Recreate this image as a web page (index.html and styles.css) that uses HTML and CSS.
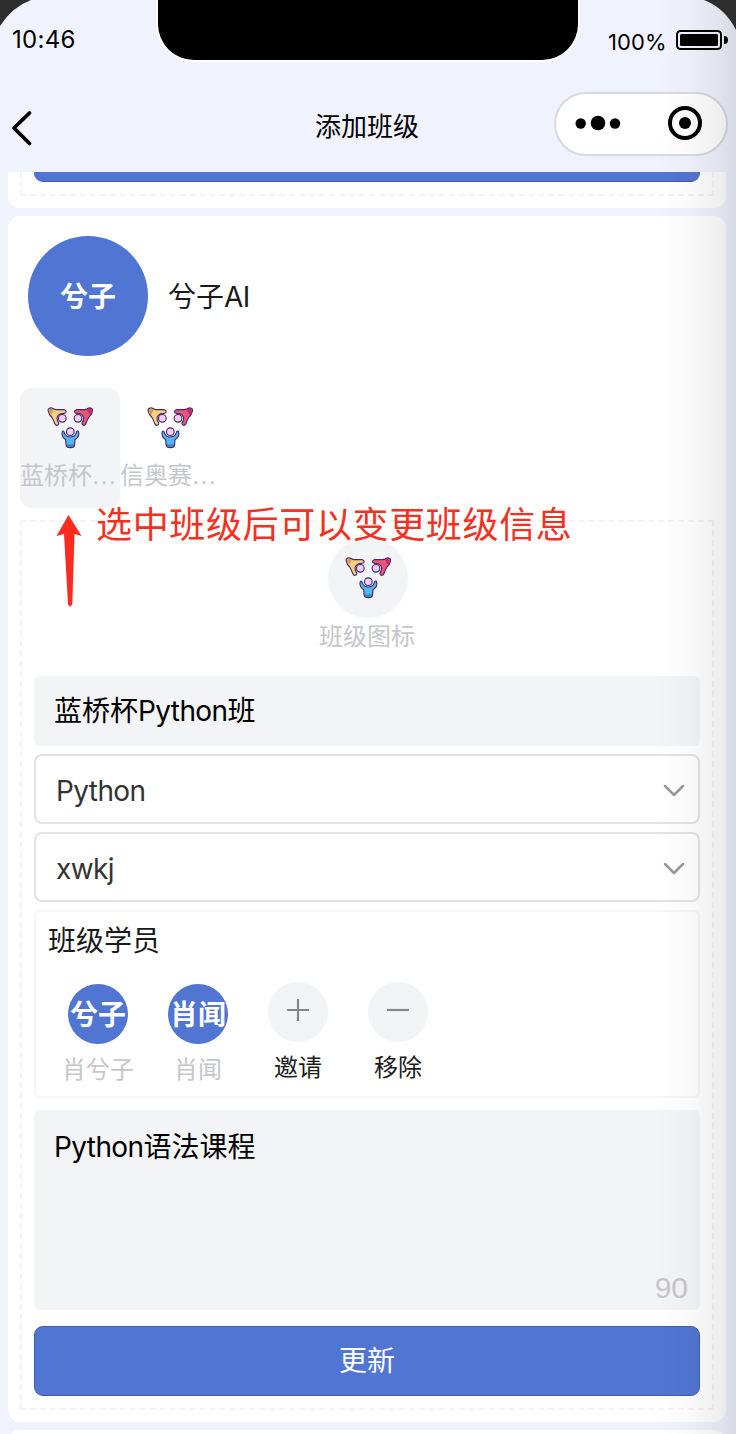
FILE: index.html
```html
<!DOCTYPE html>
<html lang="zh-CN">
<head>
<meta charset="utf-8">
<title>添加班级</title>
<link rel="stylesheet" href="styles.css">
</head>
<body>
<svg class="defs" width="0" height="0">
  <symbol id="team" viewBox="30 36 140 126">
    <g stroke="#3f2b6e" stroke-width="3.4" stroke-linejoin="round" stroke-linecap="round">
      <path fill="#f8cf7c" d="M34 49C31 40 39 38 45 39Q50 43 57 44L82 44Q90 47 86 53Q81 56 71 56Q62 60 60 68Q60 77 65 84Q66 90 60 91Q54 91 52 83Q49 73 44 66Q36 59 34 49Z"/>
      <circle fill="#f3cdfb" cx="76" cy="70" r="11.500"/>
      <path fill="#ee5575" d="M166 49C169 40 161 38 155 39Q150 43 143 44L118 44Q110 47 114 53Q119 56 129 56Q138 60 140 68Q140 77 135 84Q134 90 140 91Q146 91 148 83Q151 73 156 66Q164 59 166 49Z"/>
      <circle fill="#f3cdfb" cx="123" cy="70" r="11.500"/>
      <path fill="#58b4f0" d="M76 109Q73 118 77 125Q81 131 86 134L87 148Q88 158 100 158Q112 158 113 148L114 134Q121 130 124 124Q127 116 124 109Q119 107 118 113Q116 122 109 124Q99 128 90 124Q84 121 82 113Q80 106 76 109Z"/>
      <circle fill="#f3cdfb" cx="100" cy="110" r="11.500"/>
    </g>
    <path fill="#d99a58" d="M36 49Q35 41 45 41L50 44Q46 53 41 61Q37 56 36 49Z"/>
    <path fill="#c22f68" d="M164 49Q165 41 155 41L150 44Q154 53 159 61Q163 56 164 49Z"/>
    <path fill="#3584bd" d="M89 146Q100 151 111 146Q112 156 100 156Q89 156 89 146Z"/>
  </symbol>
</svg>
<div class="phone">
  <header class="header">
    <div class="status">
      <span class="time">10:46</span>
      <div class="notch"></div>
      <div class="power">
        <span class="percent">100%</span>
        <svg width="54" height="22" viewBox="0 0 54 22"><rect x="1" y="1" width="44" height="18" rx="3.500" fill="none" stroke="#000" stroke-width="2"/><rect x="4" y="4" width="38" height="12" rx="1.500"/><path d="M48 6Q52 6 52 10Q52 14 48 14Z"/></svg>
      </div>
    </div>
    <div class="nav">
      <svg class="back" width="24" height="38" viewBox="0 0 24 38"><path d="M20.500 4L5 19L20.500 34.500" fill="none" stroke="#000" stroke-width="3.800" stroke-linecap="round" stroke-linejoin="round"/></svg>
      <h1 class="title">添加班级</h1>
      <div class="capsule">
        <svg width="170" height="60" viewBox="0 0 170 60"><circle cx="24.700" cy="29.500" r="5.200"/><circle cx="42" cy="29" r="7.300"/><circle cx="59" cy="29.500" r="5.200"/><circle cx="129" cy="29" r="15" fill="none" stroke="#000" stroke-width="4"/><circle cx="129" cy="29" r="6"/></svg>
      </div>
    </div>
  </header>

  <main class="body">
    <section class="card card-prev">
      <div class="prev-form"><div class="prev-button"></div></div>
    </section>

    <section class="card card-main">
      <div class="owner">
        <div class="avatar avatar-lg">兮子</div>
        <div class="owner-name">兮子<span class="latin">AI</span></div>
      </div>
      <div class="classes">
        <div class="tile tile-active"><svg class="team"><use href="#team"/></svg><div class="tile-label">蓝桥杯<span class="dots">…</span></div></div>
        <div class="tile"><svg class="team"><use href="#team"/></svg><div class="tile-label">信奥赛<span class="dots">…</span></div></div>
      </div>
      <div class="form">
        <div class="emblem"><svg class="team"><use href="#team"/></svg></div>
        <div class="emblem-label">班级图标</div>
        <div class="field">蓝桥杯<span class="latin">Python</span>班</div>
        <div class="select"><span class="latin">Python</span><svg class="chevron" viewBox="0 0 22 14"><path d="M2 2L11 11L20 2"/></svg></div>
        <div class="select"><span class="latin">xwkj</span><svg class="chevron" viewBox="0 0 22 14"><path d="M2 2L11 11L20 2"/></svg></div>
        <div class="members">
          <div class="members-title">班级学员</div>
          <div class="member-row">
            <div class="member person"><div class="avatar">兮子</div><div class="member-name">肖兮子</div></div>
            <div class="member person"><div class="avatar">肖闻</div><div class="member-name">肖闻</div></div>
            <div class="member"><div class="action"><svg width="24" height="24" viewBox="0 0 24 24"><path d="M1 12H23M12 1V23"/></svg></div><div class="member-name">邀请</div></div>
            <div class="member"><div class="action"><svg width="24" height="24" viewBox="0 0 24 24"><path d="M1 12H23"/></svg></div><div class="member-name">移除</div></div>
          </div>
        </div>
        <div class="textarea"><div><span class="latin">Python</span>语法课程</div><div class="counter">90</div></div>
        <div class="button">更新</div>
      </div>
    </section>

    <section class="card card-next"></section>
  </main>

  <div class="note">选中班级后可以变更班级信息</div>
  <svg class="arrow" width="28" height="94" viewBox="0 0 28 94"><path fill="#fb2b20" d="M13.500 1L26.500 22L19.500 20L17.300 90Q15 95 13 90L9 20L1.500 22Z"/></svg>
  <div class="edge"></div>
  <svg class="corner corner-left" width="31" height="26" viewBox="0 0 31 26"><path fill="#2d2d2d" d="M0 0H31Q12 7 0 26Z"/></svg>
  <svg class="corner corner-right" width="32" height="30" viewBox="0 0 32 30"><path fill="#2d2d2d" d="M32 0H0Q21 8 32 30Z"/></svg>
</div>
</body>
</html>
```

FILE: styles.css
```css
* { box-sizing: border-box; }

body {
  margin: 0;
  background: #f0f3fd;
  font-family: "Noto Sans CJK SC", sans-serif;
}

svg { display: block; }
.defs { position: absolute; }

.phone {
  position: relative;
  width: 736px;
  height: 1434px;
  overflow: hidden;
  display: flex;
  flex-direction: column;
  background: #f0f3fd;
}

/* Status bar and navigation */
.header { flex: 0 0 172px; }

.status {
  display: grid;
  grid-template-columns: 156px 424px 156px;
  height: 92px;
  font-family: Inter, sans-serif;
  color: #000;
}

.time {
  padding: 26px 0 0 12px;
  font-size: 24px;
  line-height: 28px;
  letter-spacing: 0.3px;
}

.notch {
  height: 62px;
  border: 2px solid #fff;
  border-top: 0;
  border-radius: 0 0 38px 38px;
  background: #000;
}

.power {
  display: flex;
  gap: 10px;
  padding: 30px 0 0 28px;
}

.percent {
  width: 58px;
  font-size: 22px;
  line-height: 25px;
  letter-spacing: 0.1px;
}

.nav {
  display: grid;
  grid-template-columns: 182px 1fr 182px;
  height: 64px;
}

.back { margin: 17px 0 0 9px; }

.title {
  margin: 13px 2px 0 0;
  font-size: 26px;
  font-weight: 400;
  line-height: 40px;
  text-align: center;
  color: #000;
}

.capsule {
  width: 174px;
  height: 64px;
  border: 2px solid #d8d9de;
  border-radius: 32px;
  background: #fff;
}

/* Scrolled content */
.body {
  flex: 1;
  display: flex;
  flex-direction: column;
  gap: 8px;
  padding: 0 10px 0 8px;
  overflow: hidden;
}

.card {
  flex: none;
  border-radius: 12px;
  background: #fff;
}

.card-prev {
  height: 36px;
  padding: 0 12px;
  border-radius: 0 0 12px 12px;
}

.prev-form {
  height: 24px;
  padding: 0 12px;
  border: 2px dashed #f2f3f5;
  border-top: 0;
}

.prev-button {
  height: 10px;
  border-bottom: 1px solid #405ea8;
  border-radius: 0 0 9px 9px;
  background: #5075d3;
}

.card-main {
  height: 1206px;
  padding: 20px 12px 12px;
}

.card-next { height: 40px; }

.owner {
  display: flex;
  align-items: center;
  gap: 20px;
  padding-left: 8px;
  font-size: 28px;
  line-height: 40px;
  color: #1a1a1a;
}

.owner-name { margin-top: -1px; }

.avatar {
  width: 60px;
  height: 60px;
  border-radius: 50%;
  background: #5075d3;
  color: #fff;
  font-size: 28px;
  font-weight: 700;
  line-height: 59px;
  text-align: center;
}

.avatar-lg {
  width: 120px;
  height: 120px;
  line-height: 118px;
}

.latin {
  font-family: Inter, sans-serif;
  letter-spacing: -0.6px;
}

.classes {
  display: flex;
  margin-top: 32px;
}

.tile {
  width: 100px;
  height: 120px;
  padding-top: 19px;
  border-radius: 12px;
}

.tile-active { background: #f3f4f6; }

.team {
  width: 46.67px;
  height: 42px;
  margin: 0 auto;
}

.tile-label {
  margin-top: 7px;
  font-size: 24px;
  line-height: 36px;
  white-space: nowrap;
  color: #c5c6cc;
}

.dots {
  margin-left: -1px;
  font-family: "Liberation Sans", sans-serif;
  font-size: 26px;
  line-height: 1;
}

/* Class editor */
.form {
  height: 890px;
  margin-top: 12px;
  padding: 16px 12px 12px;
  border: 2px dashed #f2f3f5;
}

.emblem {
  width: 80px;
  height: 80px;
  margin: 0 auto;
  padding-top: 19px;
  border-radius: 50%;
  background: #f3f4f6;
  position: relative;
  left: 1px;
}

.emblem-label {
  height: 36px;
  margin-bottom: 22px;
  font-size: 24px;
  line-height: 33px;
  text-align: center;
  color: #c5c6cc;
}

.field {
  height: 70px;
  margin-bottom: 8px;
  padding-left: 20px;
  border-radius: 6px;
  background: #f3f4f6;
  color: #000;
  font-size: 28px;
  line-height: 66px;
}

.select {
  display: flex;
  align-items: center;
  justify-content: space-between;
  height: 70px;
  margin-bottom: 8px;
  padding: 3px 13px 0 20px;
  border: 2px solid #e3e3e3;
  border-radius: 8px;
  color: #333;
  font-size: 28px;
}

.chevron {
  width: 22px;
  height: 14px;
  fill: none;
  stroke: #999;
  stroke-width: 2.5;
  stroke-linecap: round;
  stroke-linejoin: round;
}

.members {
  height: 188px;
  padding: 7px 12px;
  border: 2px solid #f4f5f6;
  border-radius: 6px;
}

.members-title {
  font-size: 28px;
  line-height: 40px;
  color: #1a1a1a;
}

.member-row {
  display: flex;
  margin-top: 23px;
}

.member {
  display: flex;
  flex-direction: column;
  align-items: center;
  width: 100px;
}

.member-name {
  margin-top: 7px;
  font-size: 24px;
  line-height: 34px;
  color: #1a1a1a;
}

.person { padding-top: 2px; }
.person .member-name { color: #c5c6cc; }

.action {
  display: grid;
  justify-items: center;
  width: 60px;
  height: 60px;
  padding-top: 16px;
  border-radius: 50%;
  background: #f3f4f6;
}

.action svg {
  fill: none;
  stroke: #858585;
  stroke-width: 2.2;
}

.textarea {
  display: flex;
  flex-direction: column;
  justify-content: space-between;
  height: 200px;
  margin-top: 12px;
  padding: 15px 12px 4px 20px;
  border-radius: 6px;
  background: #f3f4f6;
  color: #000;
  font-size: 28px;
  line-height: 40px;
}

.counter {
  align-self: flex-end;
  font-family: "Liberation Sans", sans-serif;
  font-size: 30px;
  line-height: 36px;
  color: #c5c6cc;
}

.button {
  height: 70px;
  margin-top: 16px;
  border: 1px solid #405ea8;
  border-radius: 9px;
  background: #5075d3;
  color: #fff;
  font-size: 28px;
  line-height: 65px;
  text-align: center;
}

/* Callout drawn over the screen */
.note {
  position: absolute;
  left: 96px;
  top: 497px;
  font-size: 36px;
  line-height: 50px;
  letter-spacing: 0.65px;
  white-space: nowrap;
  color: #f4301f;
}

.arrow {
  position: absolute;
  left: 55px;
  top: 514px;
}

/* Phone frame shading and corners */
.edge {
  position: absolute;
  top: 0;
  right: 0;
  width: 80px;
  height: 1434px;
  background: linear-gradient(to right, rgba(0, 0, 0, 0), rgba(0, 0, 0, 0.018) 40%, rgba(0, 0, 0, 0.065) 80%, rgba(0, 0, 0, 0.105));
}

.corner { position: absolute; top: 0; }
.corner-left { left: 0; }
.corner-right { right: 0; }
```
